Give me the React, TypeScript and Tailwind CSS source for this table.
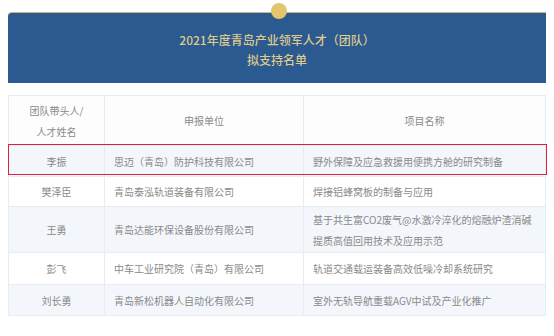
const rows = [
  { name: "李振", unit: "思迈（青岛）防护科技有限公司", project: "野外保障及应急救援用便携方舱的研究制备", h: "h-[31px]", alt: true },
  { name: "樊泽臣", unit: "青岛泰泓轨道装备有限公司", project: "焊接铝蜂窝板的制备与应用", h: "h-[30px]", alt: false },
  { name: "王勇", unit: "青岛达能环保设备股份有限公司", project: "基于共生富CO2废气@水激冷淬化的熔融炉渣消碱提质高值回用技术及应用示范", h: "h-[46px]", alt: true },
  { name: "彭飞", unit: "中车工业研究院（青岛）有限公司", project: "轨道交通载运装备高效低噪冷却系统研究", h: "h-[32px]", alt: false },
  { name: "刘长勇", unit: "青岛新松机器人自动化有限公司", project: "室外无轨导航重载AGV中试及产业化推广", h: "h-[31px]", alt: true },
];

export default function App() {
  return (
    <div
      className="relative w-[554px] h-[336px] bg-white overflow-hidden"
      style={{ fontFamily: '"Noto Sans CJK SC", "Noto Sans", sans-serif' }}
    >
      <div className="pt-[12px] pl-[8px] pr-[8px]">
        {/* Banner */}
        <div className="relative h-[71px] rounded-tl-[4px] border-t border-[#cdb77e] bg-[#2a5a90] pt-[17px] text-center text-[12px] leading-[20px] font-medium text-[#dfc98c]">
          <div>2021年度青岛产业领军人才（团队）</div>
          <div>拟支持名单</div>
        </div>

        {/* Table */}
        <table className="mt-[12px] w-[537px] table-fixed border-collapse text-[10px] leading-[21px] text-[#8a8a8a]">
          <colgroup>
            <col className="w-[96px]" />
            <col className="w-[199px]" />
            <col className="w-[242px]" />
          </colgroup>
          <thead>
            <tr className="h-[50px] bg-[#fdfdfd]">
              <th className="border border-[#e8ebf0] font-normal text-center">
                团队带头人/
                <br />
                人才姓名
              </th>
              <th className="border border-[#e8ebf0] font-normal text-center">申报单位</th>
              <th className="border border-[#e8ebf0] font-normal text-center">项目名称</th>
            </tr>
          </thead>
          <tbody>
            {rows.map((r) => (
              <tr key={r.name} className={`${r.h} ${r.alt ? "bg-[#f3f6fb]" : "bg-white"}`}>
                <td className="border border-[#e8ebf0] text-center">{r.name}</td>
                <td className="border border-[#e8ebf0] px-[9px] text-left">{r.unit}</td>
                <td className="border border-[#e8ebf0] px-[9px] text-left">{r.project}</td>
              </tr>
            ))}
          </tbody>
        </table>
      </div>

      {/* gold knob on banner */}
      <div className="absolute left-[271px] top-[3px] h-[16px] w-[16px] rounded-full bg-[#e2c56c]" />

      {/* red highlight box */}
      <div className="absolute left-[8px] top-[144px] h-[31px] w-[539px] border-[1.5px] border-[#e0213b]" />
    </div>
  );
}
